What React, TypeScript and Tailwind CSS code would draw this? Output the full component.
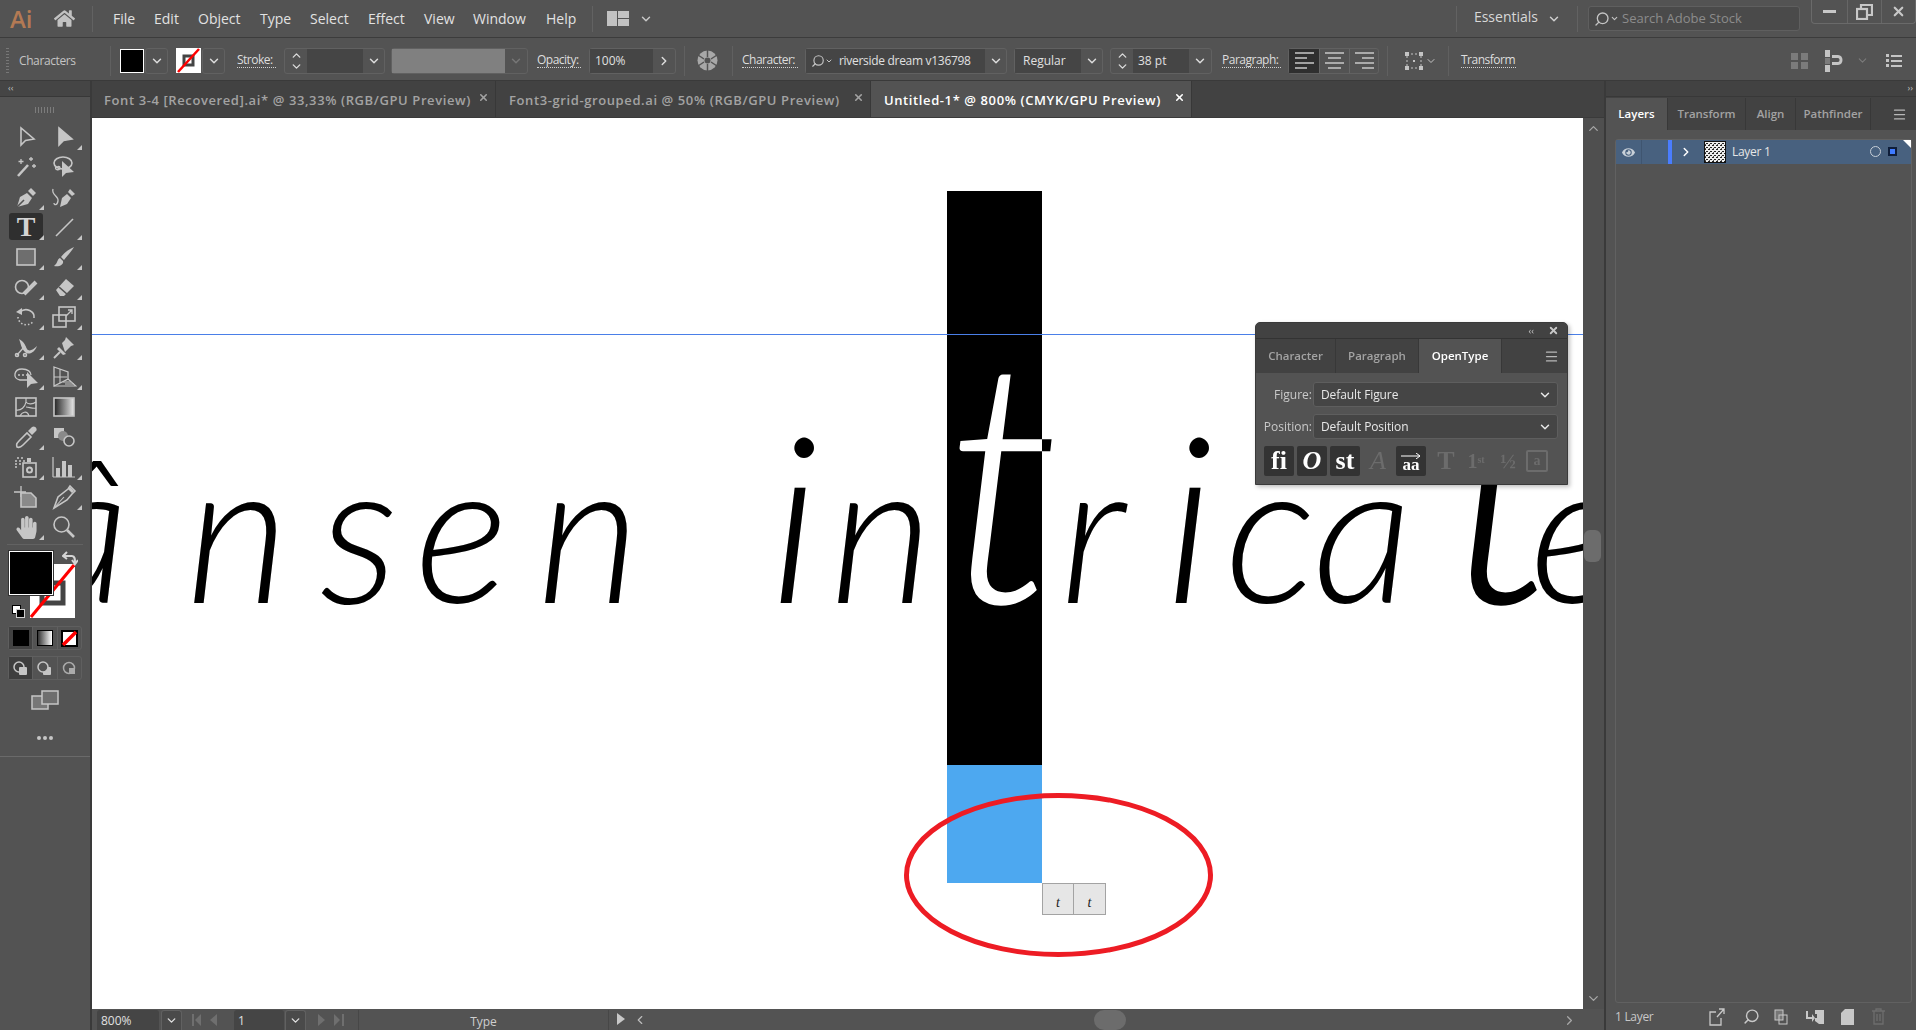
import type { ReactNode } from "react";
import { ChevronDown, ChevronLeft, ChevronRight, ChevronUp, Menu, Search, X } from "lucide-react";
import { FaEye, FaHandPaper, FaHome } from "react-icons/fa";

const tools: { icon: ReactNode; corner?: boolean }[] = [
  { icon: <path d="M8 4V21L12.5 16.5L21 15Z" /> },
  { icon: <path d="M8 4V21L12.5 16.5L21 15Z" fill="#c6c6c6" />, corner: true },
  {
    icon: (
      <>
        <path d="M5 22L15 11" strokeWidth="2.6" />
        <path d="M8 5V10M5.5 7.500H10.500M18 3V7M16 5H20M21 10V14M19 12H23" strokeWidth="1.3" />
      </>
    ),
  },
  {
    icon: (
      <>
        <ellipse cx="12" cy="9" rx="9" ry="6" />
        <path d="M5 12C3 16 8 17 9 14C9 12 6 12 6 14" strokeWidth="1.3" />
        <path d="M11 7V23L15 19L23 18Z" fill="#c6c6c6" stroke="none" />
      </>
    ),
  },
  {
    icon: (
      <>
        <path d="M4 23L7 13L14 9L19 14L15 20Z" fill="#c6c6c6" stroke="none" />
        <path d="M15 7L18 4L23 9L20 12Z" fill="#c6c6c6" stroke="none" />
        <path d="M4 23L11 16" stroke="#535353" />
      </>
    ),
    corner: true,
  },
  {
    icon: (
      <>
        <path d="M9 23L11 14L16 10L20 14L16 20Z" fill="#c6c6c6" stroke="none" />
        <path d="M17 8L19 5L24 10L21 12Z" fill="#c6c6c6" stroke="none" />
        <path d="M2 5C0 11 8 12 7 17C6 22 3 21 3 19" strokeWidth="1.3" />
      </>
    ),
  },
  { icon: <></>, corner: true },
  { icon: <path d="M5 22L22 5" />, corner: true },
  { icon: <rect x="4" y="5" width="18" height="16" fill="#6e6e6e" />, corner: true },
  {
    icon: (
      <>
        <path d="M23 3C20 8 16 12 13 16L10 13C13 9 18 5 23 3Z" fill="#c6c6c6" stroke="none" />
        <path d="M9 14C6 15 7 19 3 22C8 23 13 21 12 17Z" fill="#c6c6c6" stroke="none" />
      </>
    ),
    corner: true,
  },
  {
    icon: (
      <>
        <circle cx="9" cy="13" r="6.500" />
        <path d="M11 20L23 8" strokeWidth="4" />
      </>
    ),
    corner: true,
  },
  {
    icon: (
      <>
        <path d="M5 16L15 5L23 12L13 22L9 22Z" fill="#c6c6c6" stroke="none" />
        <path d="M8 13L17 21" stroke="#535353" />
      </>
    ),
    corner: true,
  },
  {
    icon: (
      <>
        <path d="M7 8C13 3 22 7 21 14" />
        <path d="M3 8L9 4V11Z" fill="#c6c6c6" stroke="none" />
        <path d="M5 13C5 19 13 24 20 18" strokeDasharray="1.500 2" />
      </>
    ),
    corner: true,
  },
  {
    icon: (
      <>
        <rect x="8" y="3" width="16" height="14" />
        <rect x="2" y="11" width="13" height="12" />
        <path d="M15 12L21 6M17 6H21V10" strokeWidth="1.3" />
      </>
    ),
    corner: true,
  },
  {
    icon: (
      <>
        <path d="M6 5C12 8 12 12 14 15C16 18 20 16 24 12C22 18 16 22 12 18C8 14 8 10 6 5Z" fill="#c6c6c6" stroke="none" />
        <path d="M4 21L12 12" strokeWidth="1.3" />
        <circle cx="4" cy="21" r="1.500" />
        <circle cx="12" cy="21" r="1.500" />
      </>
    ),
    corner: true,
  },
  {
    icon: (
      <>
        <path d="M15 3L23 11L20 12L14 18L11 9L14 6Z" fill="#c6c6c6" stroke="none" />
        <path d="M8 13L15 20L12 21L6 15Z" fill="#c6c6c6" stroke="none" />
        <path d="M9 18L3 24" strokeWidth="2" />
      </>
    ),
    corner: true,
  },
  {
    icon: (
      <>
        <path d="M15 16H7C-1 14 1 5 9 5C15 5 18 8 18 11" strokeWidth="1.3" />
        <path d="M5 11H14" strokeDasharray="2 2" strokeWidth="1.500" />
        <path d="M14 8V24L18 20L25 19Z" fill="#c6c6c6" stroke="none" />
      </>
    ),
    corner: true,
  },
  {
    icon: (
      <>
        <path d="M3 3L17 8V15L3 22Z" strokeWidth="1.300" />
        <path d="M9 5V19M3 13H16M17 15L25 22H3" strokeWidth="1.100" />
        <path d="M12 18H20M14 20H23" strokeWidth="1" />
      </>
    ),
    corner: true,
  },
  {
    icon: (
      <>
        <rect x="3" y="4" width="20" height="18" />
        <path d="M3 16C8 17 12 13 13 8C15 11 20 10 23 8M13 8V4M7 22C9 18 14 16 16 22M13 13C16 13 20 15 23 14" strokeWidth="1.200" />
      </>
    ),
  },
  {
    icon: (
      <>
        <defs>
          <linearGradient id="toolGrad">
            <stop offset="0" stopColor="#222" />
            <stop offset="1" stopColor="#e8e8e8" />
          </linearGradient>
        </defs>
        <rect x="3" y="4" width="20" height="18" fill="url(#toolGrad)" />
      </>
    ),
  },
  {
    icon: (
      <>
        <path d="M4 23C3 20 4 19 6 17L14 9L18 13L10 21C8 23 6 24 4 23Z" />
        <path d="M15 7L19 3C22 1 25 5 23 7L19 11Z" fill="#c6c6c6" stroke="none" />
      </>
    ),
    corner: true,
  },
  {
    icon: (
      <>
        <rect x="3" y="4" width="10" height="10" fill="#c6c6c6" stroke="none" />
        <circle cx="12" cy="12" r="5" fill="#8a8a8a" stroke="none" />
        <circle cx="18" cy="17" r="5" fill="#535353" />
      </>
    ),
  },
  {
    icon: (
      <>
        <path d="M2 7H4M6 7H8M10 7H12M2 10H4M6 10H8M2 13H4M4 4H6M8 4H10" strokeWidth="1.400" />
        <rect x="14" y="4" width="4" height="4" fill="#c6c6c6" stroke="none" />
        <rect x="10" y="9" width="13" height="14" />
        <circle cx="16.500" cy="16" r="2.500" strokeWidth="2" />
      </>
    ),
    corner: true,
  },
  {
    icon: (
      <>
        <path d="M2 23H24M2 3V23" strokeWidth="1.200" />
        <rect x="5" y="14" width="4" height="9" fill="#c6c6c6" stroke="none" />
        <rect x="11" y="7" width="4" height="16" fill="#c6c6c6" stroke="none" />
        <rect x="17" y="11" width="4" height="12" fill="#c6c6c6" stroke="none" />
      </>
    ),
    corner: true,
  },
  {
    icon: (
      <>
        <path d="M1 8H13M8 2V13" strokeWidth="1.300" />
        <path d="M8 9H18L23 14V23H8Z" fill="#8a8a8a" />
      </>
    ),
  },
  {
    icon: (
      <>
        <path d="M3 24L7 13L17 5L19 2L24 7L21 10L16 16Z" />
        <path d="M3 24L13 13" strokeWidth="1.100" />
        <path d="M18 4L22 8" strokeWidth="3" />
      </>
    ),
    corner: true,
  },
  { icon: <></>, corner: true },
  {
    icon: (
      <>
        <circle cx="10.500" cy="10.500" r="7.500" />
        <path d="M16 16L23 23" strokeWidth="2.600" />
      </>
    ),
  },
];

const inputBox = "flex items-center rounded-[3px] border border-[#616161] bg-[#535353] h-[26px]";

function ToolPanel() {
  return (
    <div className="w-[92px] shrink-0 border-r-2 border-[#3a3a3a] bg-[#535353] flex flex-col">
      <div className="h-[16px] bg-[#454545] border-b border-[#383838] text-[#c0c0c0] text-[9px] leading-[14px] pl-[8px]">‹‹</div>
      <div className="h-[25px] flex items-center justify-center">
        <div className="w-[20px] h-[6px] bg-[repeating-linear-gradient(90deg,#7c7c7c_0,#7c7c7c_1px,transparent_1px,transparent_3px)]" />
      </div>
      <div className="pl-[7px] grid grid-cols-[38px_38px] auto-rows-[30px]">
        {tools.map((tool, index) => (
          <div key={index} className="relative flex items-center justify-center">
            {index === 6 && (
              <div className="absolute left-[2px] top-[1px] w-[34px] h-[27px] rounded-[3px] bg-[#2f2f2f]" />
            )}
            {index === 6 ? (
              <span className="relative font-['Liberation_Serif',serif] font-bold text-[28px] leading-none text-[#d4d4d4]">T</span>
            ) : index === 26 ? (
              <FaHandPaper className="text-[#c6c6c6]" size={23} />
            ) : (
              <svg width="26" height="26" viewBox="0 0 26 26" fill="none" stroke="#c6c6c6" strokeWidth="1.600">
                {tool.icon}
              </svg>
            )}
            {tool.corner && (
              <div className="absolute right-[1px] bottom-[2px] w-0 h-0 border-l-[5px] border-l-transparent border-b-[5px] border-b-[#c6c6c6]" />
            )}
          </div>
        ))}
      </div>
      <div className="mx-[7px] mt-[2px] h-px bg-[#626262]" />

      {/* fill and stroke */}
      <div className="relative h-[75px] mt-[6px]">
        <svg className="absolute left-[30px] top-[13px]" width="45" height="54" viewBox="0 0 45 54">
          <rect width="45" height="54" fill="#fff" />
          <rect x="12" y="19" width="21" height="20" fill="none" stroke="#444" strokeWidth="5" />
          <path d="M1 53L44 1" stroke="#f00" strokeWidth="3" />
        </svg>
        <div className="absolute left-[9px] top-0 w-[44px] h-[44px] bg-black border border-white outline outline-[#333]" />
        <svg className="absolute left-[62px] top-[-1px]" width="16" height="16" viewBox="0 0 16 16" fill="none" stroke="#d4d4d4" strokeWidth="2">
          <path d="M2 6H10C13 6 13 9 13 13" />
          <path d="M5 2L1 6L5 9M10 10L13 14L16 10" />
        </svg>
        <div className="absolute left-[12px] top-[54px] w-[9px] h-[9px] bg-white border border-black" />
        <div className="absolute left-[16px] top-[58px] w-[9px] h-[9px] bg-black border border-[#cfcfcf]" />
      </div>
      <div className="mx-[8px] h-[24px] flex rounded-[3px] border border-[#5f5f5f]">
        <div className="flex-1 bg-[#414141] flex items-center justify-center">
          <div className="w-[16px] h-[16px] bg-black border border-black" />
        </div>
        <div className="flex-1 flex items-center justify-center border-l border-[#5f5f5f]">
          <div className="w-[16px] h-[16px] border border-black bg-[linear-gradient(90deg,#333,#fff)]" />
        </div>
        <div className="flex-1 flex items-center justify-center border-l border-[#5f5f5f]">
          <svg width="17" height="17" viewBox="0 0 17 17">
            <rect x="1" y="1" width="15" height="15" fill="#fff" stroke="#000" strokeWidth="2" />
            <path d="M2 15L15 2" stroke="#f00" strokeWidth="3.500" />
          </svg>
        </div>
      </div>
      <div className="mx-[8px] mt-[6px] h-[24px] flex rounded-[3px] border border-[#5f5f5f]">
        <div className="flex-1 bg-[#3e3e3e] flex items-center justify-center">
          <svg width="15" height="15" viewBox="0 0 15 15">
            <circle cx="6" cy="6" r="5" fill="none" stroke="#c6c6c6" strokeWidth="1.500" />
            <rect x="6" y="6" width="8" height="8" rx="1" fill="#c6c6c6" />
          </svg>
        </div>
        <div className="flex-1 flex items-center justify-center border-l border-[#5f5f5f]">
          <svg width="15" height="15" viewBox="0 0 15 15">
            <rect x="6" y="6" width="8" height="8" rx="1" fill="#c6c6c6" />
            <circle cx="6" cy="6" r="5" fill="#535353" stroke="#c6c6c6" strokeWidth="1.500" />
          </svg>
        </div>
        <div className="flex-1 flex items-center justify-center border-l border-[#5f5f5f]">
          <svg width="15" height="15" viewBox="0 0 15 15">
            <circle cx="7" cy="7" r="5.500" fill="none" stroke="#aaa" strokeWidth="1.500" />
            <path d="M7 7H13V13H7Z" fill="#aaa" />
          </svg>
        </div>
      </div>
      <div className="mt-[10px] flex justify-center">
        <svg width="28" height="20" viewBox="0 0 28 20">
          <rect x="1" y="6" width="16" height="13" fill="#777" stroke="#c6c6c6" strokeWidth="1.500" />
          <rect x="11" y="1" width="16" height="13" fill="#6e6e6e" stroke="#c6c6c6" strokeWidth="1.500" />
        </svg>
      </div>
      <div className="mt-[26px] flex justify-center gap-[2px]">
        <div className="w-[4px] h-[4px] rounded-full bg-[#c6c6c6]" />
        <div className="w-[4px] h-[4px] rounded-full bg-[#c6c6c6]" />
        <div className="w-[4px] h-[4px] rounded-full bg-[#c6c6c6]" />
      </div>
      <div className="mt-[16px] h-px bg-[#6a6a6a]" />
    </div>
  );
}

function TopBar() {
  const menus = [
    ["File", "w-[41px]"],
    ["Edit", "w-[44px]"],
    ["Object", "w-[62px]"],
    ["Type", "w-[50px]"],
    ["Select", "w-[58px]"],
    ["Effect", "w-[56px]"],
    ["View", "w-[49px]"],
    ["Window", "w-[73px]"],
    ["Help", "w-[46px]"],
  ];
  return (
    <div className="h-[38px] shrink-0 flex items-center bg-[#535353] border-b border-[#3c3c3c] relative">
      <span className="ml-[10px] w-[30px] font-['Open_Sans',sans-serif] text-[24px] font-semibold leading-none text-[#b37a54]">Ai</span>
      <FaHome className="ml-[14px] text-[#c2c2c2]" size={21} />
      <div className="ml-[17px] w-px h-[26px] bg-[#626262]" />
      <div className="ml-[20px] flex text-[14px] text-[#e2e2e2]">
        {menus.map(([label, width]) => (
          <span key={label} className={width}>
            {label}
          </span>
        ))}
      </div>
      <div className="w-px h-[26px] bg-[#626262]" />
      <svg className="ml-[14px]" width="22" height="15" viewBox="0 0 22 15" fill="#c2c2c2">
        <rect x="0" y="0" width="10" height="15" />
        <rect x="11" y="0" width="11" height="7" />
        <rect x="11" y="8" width="11" height="7" />
      </svg>
      <ChevronDown className="ml-[10px] text-[#c8c8c8]" size={14} strokeWidth={2.500} />
      <div className="ml-auto w-px h-[26px] bg-[#626262]" />
      <span className="ml-[17px] text-[14px] text-[#d8d8d8] -mt-[4px]">Essentials</span>
      <ChevronDown className="ml-[9px] text-[#d0d0d0]" size={14} strokeWidth={2.500} />
      <div className="ml-[16px] w-px h-[26px] bg-[#626262]" />
      <div className="ml-[10px] w-[212px] h-[25px] flex items-center rounded-[3px] border border-[#5f5f5f] bg-[#4a4a4a]">
        <Search className="ml-[5px] -scale-x-100 text-[#c4c4c4]" size={16} />
        <ChevronDown className="text-[#c4c4c4]" size={9} strokeWidth={3} />
        <span className="ml-[3px] text-[13px] text-[#8c8c8c]">Search Adobe Stock</span>
      </div>
      <div className="ml-[11px] w-[105px] h-[24px] self-start flex rounded-b-[4px] border-x border-b border-[#6a6a6a] text-[#c8c8c8]">
        <div className="w-[35px] flex items-center justify-center">
          <div className="w-[13px] h-[3px] bg-[#c8c8c8]" />
        </div>
        <div className="w-[34px] flex items-center justify-center border-l border-[#666]">
          <svg width="17" height="16" viewBox="0 0 17 16" fill="none" stroke="#c8c8c8" strokeWidth="2.200">
            <rect x="1" y="5" width="10" height="10" />
            <path d="M5 5V1H16V11H11" />
          </svg>
        </div>
        <div className="flex-1 flex items-center justify-center border-l border-[#666]">
          <X size={15} strokeWidth={3.500} />
        </div>
      </div>
    </div>
  );
}

function Label({ children, className }: { children: ReactNode; className: string }) {
  return (
    <span className={`text-[12px] leading-[14px] text-[#dedede] border-b border-dotted border-[#d0d0d0] tracking-[-0.5px] ${className}`}>
      {children}
    </span>
  );
}

function ChevCell({ className }: { className: string }) {
  return (
    <div className={`h-full flex items-center justify-center ${className}`}>
      <ChevronDown className="text-[#dcdcdc]" size={14} strokeWidth={2.500} />
    </div>
  );
}

function Stepper() {
  return (
    <div className="w-[22px] h-full flex flex-col items-center justify-center text-[#dcdcdc]">
      <ChevronUp size={13} strokeWidth={2.500} className="-mb-[1px]" />
      <ChevronDown size={13} strokeWidth={2.500} className="-mt-[1px]" />
    </div>
  );
}

function Lines({ d }: { d: string }) {
  return (
    <svg width="21" height="17" viewBox="0 0 21 17" fill="none" stroke="#c9c9c9" strokeWidth="1.500">
      <path d={d} />
    </svg>
  );
}

function OptionsBar() {
  return (
    <div className="h-[43px] shrink-0 flex items-center pt-[3px] bg-[#535353] border-b border-[#3a3a3a] text-[12px] text-[#e0e0e0]">
      <div className="ml-[6px] w-[3px] h-[26px] bg-[repeating-linear-gradient(180deg,#777_0,#777_1px,transparent_1px,transparent_3px)]" />
      <span className="ml-[10px] w-[91px] text-[#c4c4c4] tracking-[-0.4px]">Characters</span>
      <div className="w-px h-[30px] bg-[#606060]" />
      <div className="ml-[9px] w-[24px] h-[24px] bg-black border border-white" />
      <div className={`${inputBox} ml-[1px] w-[23px] justify-center`}>
        <ChevronDown className="text-[#dcdcdc]" size={14} strokeWidth={2.500} />
      </div>
      <svg className="ml-[8px]" width="25" height="25" viewBox="0 0 25 25">
        <rect width="25" height="25" fill="#fff" />
        <rect x="8" y="8" width="9" height="9" fill="none" stroke="#444" strokeWidth="3" />
        <path d="M2 24L23 1" stroke="#f00" strokeWidth="2.500" />
      </svg>
      <div className={`${inputBox} ml-[1px] w-[23px] justify-center`}>
        <ChevronDown className="text-[#dcdcdc]" size={14} strokeWidth={2.500} />
      </div>
      <Label className="ml-[12px] w-[39px]">Stroke:</Label>
      <div className={`${inputBox} ml-[8px] w-[101px]`}>
        <Stepper />
        <div className="w-[56px] h-full bg-[#454545]" />
        <ChevCell className="flex-1" />
      </div>
      <div className={`${inputBox} ml-[6px] w-[137px] border-[#5d5d5d]`}>
        <div className="w-[113px] h-full bg-[#808080]" />
        <div className="flex-1 flex justify-center">
          <ChevronDown className="text-[#777]" size={14} strokeWidth={2.500} />
        </div>
      </div>
      <Label className="ml-[9px] w-[44px]">Opacity:</Label>
      <div className={`${inputBox} ml-[8px] w-[87px]`}>
        <div className="w-[63px] h-full bg-[#454545] pl-[5px] flex items-center">100%</div>
        <div className="flex-1 flex justify-center">
          <ChevronRight className="text-[#dcdcdc]" size={14} strokeWidth={2.500} />
        </div>
      </div>
      <div className="ml-[8px] w-px h-[30px] bg-[#606060]" />
      <svg className="ml-[12px]" width="21" height="21" viewBox="0 0 21 21">
        <circle cx="10.500" cy="10.500" r="10" fill="#a8a8a8" />
        <circle cx="10.500" cy="10.500" r="3" fill="#535353" />
        <path d="M10.500 0V7M10.500 14V21M1 5L7 9M14 12L20 16M1 16L7 12M14 9L20 5" stroke="#535353" strokeWidth="1.500" />
      </svg>
      <div className="ml-[14px] w-px h-[30px] bg-[#606060]" />
      <Label className="ml-[9px] w-[56px]">Character:</Label>
      <div className={`${inputBox} ml-[7px] w-[202px]`}>
        <div className="w-[179px] h-full bg-[#454545] flex items-center overflow-hidden">
          <Search className="ml-[5px] -scale-x-100 text-[#c4c4c4]" size={14} />
          <ChevronDown className="text-[#c4c4c4]" size={8} strokeWidth={3} />
          <span className="ml-[6px] whitespace-nowrap tracking-[-0.3px]">riverside dream v136798</span>
        </div>
        <ChevCell className="flex-1" />
      </div>
      <div className={`${inputBox} ml-[7px] w-[89px]`}>
        <div className="w-[66px] h-full bg-[#454545] pl-[8px] flex items-center">Regular</div>
        <ChevCell className="flex-1" />
      </div>
      <div className={`${inputBox} ml-[7px] w-[102px]`}>
        <Stepper />
        <div className="w-[56px] h-full bg-[#454545] pl-[5px] flex items-center">38 pt</div>
        <ChevCell className="flex-1" />
      </div>
      <Label className="ml-[10px] w-[59px]">Paragraph:</Label>
      <div className={`${inputBox} ml-[7px] w-[91px]`}>
        <div className="w-[30px] h-full bg-[#2f2f2f] flex items-center justify-center">
          <Lines d="M1 1H20M1 6H13M1 11H20M1 16H13" />
        </div>
        <div className="w-[30px] h-full flex items-center justify-center border-l border-[#666]">
          <Lines d="M1 1H20M4 6H17M1 11H20M4 16H17" />
        </div>
        <div className="flex-1 h-full flex items-center justify-center border-l border-[#666]">
          <Lines d="M1 1H20M8 6H20M1 11H20M8 16H20" />
        </div>
      </div>
      <div className="ml-[8px] w-px h-[30px] bg-[#606060]" />
      <svg className="ml-[17px]" width="18" height="18" viewBox="0 0 18 18" fill="none" stroke="#c4c4c4">
        <rect x="2" y="2" width="14" height="14" strokeDasharray="2 2" />
        <path d="M0 0H4V4H0ZM14 0H18V4H14ZM0 14H4V18H0ZM14 14H18V18H14ZM8 8H10V10H8Z" fill="#c4c4c4" stroke="none" />
      </svg>
      <ChevronDown className="ml-[2px] text-[#c4c4c4]" size={12} />
      <div className="ml-[11px] w-px h-[30px] bg-[#606060]" />
      <Label className="ml-[12px] w-[55px]">Transform</Label>
      <svg className="ml-[275px]" width="18" height="18" viewBox="0 0 18 18" fill="#7b7b7b">
        <rect x="0" y="1" width="7" height="7" />
        <rect x="10" y="1" width="7" height="7" />
        <rect x="0" y="10" width="7" height="7" />
        <rect x="10" y="10" width="7" height="7" />
      </svg>
      <svg className="ml-[16px]" width="20" height="22" viewBox="0 0 20 22">
        <rect x="0" y="0" width="5" height="7" fill="#c4c4c4" />
        <rect x="0" y="15" width="5" height="7" fill="#c4c4c4" />
        <rect x="0" y="8" width="5" height="6" fill="#7b7b7b" />
        <path d="M7 5H13C19 5 19 15 13 15H7V12H13C15 12 15 8 13 8H7Z" fill="#c4c4c4" />
      </svg>
      <ChevronDown className="ml-[11px] text-[#7b7b7b]" size={13} />
      <svg className="ml-[17px]" width="16" height="13" viewBox="0 0 16 13" fill="#c4c4c4">
        <path d="M0 0H3V3H0ZM0 5H3V8H0ZM0 10H3V13H0ZM5 1H16V3H5ZM5 6H16V8H5ZM5 11H16V13H5Z" />
      </svg>
    </div>
  );
}

function DocTab({ title, className, active }: { title: string; className: string; active?: boolean }) {
  return (
    <div className={`h-full flex items-center pt-[3px] relative border-r border-[#383838] ${active ? "bg-[#535353] text-white" : "bg-[#424242] text-[#a3a3a3]"} ${className}`}>
      <span className="text-[13px] font-semibold tracking-[0.6px] whitespace-nowrap">{title}</span>
      <X className="absolute right-[6px] top-[11px]" size={11} strokeWidth={3.500} />
    </div>
  );
}

function OpenTypePanel() {
  return (
    <div className="absolute left-[1163px] top-[204px] z-10 w-[313px] h-[163px] rounded-t-[5px] bg-[#535353] border border-[#3a3a3a] shadow-[2px_2px_4px_rgba(0,0,0,0.25)] font-['Open_Sans',sans-serif] text-[12px]">
      <div className="h-[16px] bg-[#424242] rounded-t-[4px] border-b border-[#333] flex items-center justify-end text-[#c8c8c8]">
        <span className="text-[9px] mr-[14px]">‹‹</span>
        <X className="mr-[8px]" size={11} strokeWidth={4} />
      </div>
      <div className="h-[34px] flex bg-[#424242] text-[#a3a3a3] font-semibold text-[11.500px]">
        <div className="w-[80px] flex items-center justify-center border-r border-[#383838]">Character</div>
        <div className="w-[83px] flex items-center justify-center border-r border-[#383838]">Paragraph</div>
        <div className="w-[83px] flex items-center justify-center bg-[#535353] text-white border-r border-[#383838]">OpenType</div>
        <Menu className="ml-auto mr-[8px] mt-[10px] text-[#b8b8b8]" size={15} />
      </div>
      <div className="flex items-center mt-[9px] h-[25px]">
        <span className="w-[56px] text-right text-[#c9c9c9]">Figure:</span>
        <div className="ml-[1px] w-[245px] h-full rounded-[3px] bg-[#454545] border border-[#5e5e5e] flex items-center justify-between pl-[7px] pr-[5px] text-[#e8e8e8] tracking-[-0.1px]">
          Default Figure
          <ChevronDown size={14} strokeWidth={2.500} />
        </div>
      </div>
      <div className="flex items-center mt-[7px] h-[25px]">
        <span className="w-[56px] text-right text-[#c9c9c9]">Position:</span>
        <div className="ml-[1px] w-[245px] h-full rounded-[3px] bg-[#454545] border border-[#5e5e5e] flex items-center justify-between pl-[7px] pr-[5px] text-[#e8e8e8] tracking-[-0.1px]">
          Default Position
          <ChevronDown size={14} strokeWidth={2.500} />
        </div>
      </div>
      <div className="mt-[7px] ml-[8px] flex items-center h-[30px] font-['Liberation_Serif',serif] font-bold text-[26px] leading-none">
        <div className="w-[30px] h-[30px] rounded-[2px] bg-[#333] text-white flex items-center justify-center">fi</div>
        <div className="ml-[3px] w-[30px] h-[30px] rounded-[2px] bg-[#333] text-white flex items-center justify-center italic">O</div>
        <div className="ml-[3px] w-[30px] h-[30px] rounded-[2px] bg-[#333] text-white flex items-center justify-center">st</div>
        <div className="ml-[8px] w-[20px] text-[#6c6c6c] italic font-normal text-center">A</div>
        <div className="relative ml-[8px] w-[30px] h-[30px] rounded-[2px] bg-[#333] text-white flex items-end justify-center pb-[3px] text-[17px]">
          aa
          <svg className="absolute top-[7px] left-[5px]" width="20" height="6" viewBox="0 0 20 6" fill="none" stroke="#fff">
            <path d="M0 3H19M15 0L19 3L15 6" />
          </svg>
        </div>
        <div className="ml-[10px] w-[20px] text-center text-[#6c6c6c]">T</div>
        <div className="ml-[8px] w-[24px] text-center text-[#6c6c6c] text-[20px]">1<sup className="text-[10px]">st</sup></div>
        <div className="ml-[8px] w-[24px] text-center text-[#6c6c6c] text-[21px]">½</div>
        <div className="ml-[6px] w-[22px] h-[22px] border-2 border-[#6c6c6c] rounded-[2px] text-[#6c6c6c] text-[14px] flex items-center justify-center">a</div>
      </div>
    </div>
  );
}

function Canvas() {
  return (
    <div className="relative flex-1 isolate overflow-hidden bg-white">
      <div className="absolute left-[855px] top-[73px] w-[95px] flex flex-col">
        <div className="h-[574px] bg-black" />
        <div className="h-[118px] bg-[#4da8f0]" />
      </div>
      <div className="absolute left-0 right-0 top-[216px] h-px bg-[#4a7fe8]" />

      {/* script line, letters spaced to sit where the picture has them */}
      <div className="absolute left-[-62px] top-[183px] flex items-baseline whitespace-nowrap font-['Lato',sans-serif] italic font-light text-[200px] leading-none text-white mix-blend-difference">
        <span className="inline-block w-[156px]">â</span>
        <span className="inline-block w-[134px]">n</span>
        <span className="inline-block w-[95px]">s</span>
        <span className="inline-block w-[122px]">e</span>
        <span className="inline-block w-[233px]">n </span>
        <span className="inline-block w-[60px] text-[232px]">i</span>
        <span className="inline-block w-[115px]">n</span>
        <span className="inline-block w-[115px] text-[340px]">t</span>
        <span className="inline-block w-[105px]">r</span>
        <span className="inline-block w-[60px] text-[232px]">i</span>
        <span className="inline-block w-[88px]">c</span>
        <span className="inline-block w-[132px]">a</span>
        <span className="inline-block w-[85px] text-[340px]">t</span>
        <span className="inline-block w-[100px]">e</span>
      </div>

      <svg className="absolute left-[812px] top-[675px]" width="309" height="164" viewBox="0 0 309 164" fill="none">
        <ellipse cx="154.500" cy="82" rx="152" ry="79.500" stroke="#ed1c24" strokeWidth="5" />
      </svg>
      <div className="absolute left-[950px] top-[765px] flex border border-[#a3a3a3] bg-[#e6e6e6] font-['Liberation_Serif',serif] italic text-[14px] text-[#222]">
        <div className="w-[31px] h-[30px] border-r border-[#a3a3a3] flex items-end justify-center pb-[1px]">t</div>
        <div className="w-[31px] h-[30px] flex items-end justify-center pb-[1px]">t</div>
      </div>
      <OpenTypePanel />
    </div>
  );
}

function StatusBar() {
  return (
    <div className="h-[21px] shrink-0 bg-[#535353] flex items-end text-[12px] text-[#e0e0e0]">
      <div className="ml-[5px] w-[62px] h-[20px] rounded-t-[3px] bg-[#454545] pl-[4px] leading-[22px]">800%</div>
      <div className="ml-[2px] w-[21px] h-[20px] rounded-t-[3px] bg-[#4a4a4a] border-x border-t border-[#616161] flex items-center justify-center">
        <ChevronDown size={13} strokeWidth={2.500} />
      </div>
      <div className="ml-[10px] w-[42px] h-[20px] flex items-center gap-[8px] text-[#6f6f6f]">
        <svg width="10" height="12" viewBox="0 0 10 12" fill="currentColor"><path d="M0 0H2V12H0ZM9 0V12L3 6Z" /></svg>
        <svg width="8" height="12" viewBox="0 0 8 12" fill="currentColor"><path d="M7 0V12L0 6Z" /></svg>
      </div>
      <div className="w-[50px] h-[20px] rounded-t-[3px] bg-[#454545] pl-[4px] leading-[22px]">1</div>
      <div className="ml-[1px] w-[21px] h-[20px] rounded-t-[3px] bg-[#4a4a4a] border-x border-t border-[#616161] flex items-center justify-center">
        <ChevronDown size={13} strokeWidth={2.500} />
      </div>
      <div className="ml-[12px] w-[40px] h-[20px] flex items-center gap-[8px] text-[#6f6f6f]">
        <svg width="8" height="12" viewBox="0 0 8 12" fill="currentColor"><path d="M0 0V12L7 6Z" /></svg>
        <svg width="10" height="12" viewBox="0 0 10 12" fill="currentColor"><path d="M0 0V12L6 6ZM8 0H10V12H8Z" /></svg>
      </div>
      <div className="w-[251px] h-[20px] border-x border-[#474747] text-center leading-[24px] text-[#cfcfcf]">Type</div>
      <div className="ml-[8px] mb-[5px] w-0 h-0 border-y-[6px] border-y-transparent border-l-[8px] border-l-[#c8c8c8]" />
      <ChevronLeft className="ml-[8px] mb-[3px] text-[#bdbdbd]" size={14} />
      <div className="ml-[447px] w-[32px] h-[20px] rounded-[10px] bg-[#6c6c6c]" />
      <ChevronRight className="ml-[436px] mb-[2px] text-[#a8a8a8]" size={15} />
    </div>
  );
}

function RightPanel() {
  return (
    <div className="w-[312px] shrink-0 border-l-2 border-[#3a3a3a] bg-[#535353] flex flex-col font-['Open_Sans',sans-serif]">
      <div className="h-[16px] bg-[#424242] border-b border-[#383838] text-right pr-[3px] text-[9px] leading-[14px] text-[#c0c0c0]">››</div>
      <div className="h-[33px] flex bg-[#424242] text-[#a3a3a3] font-semibold text-[11.500px] pt-[1px]">
        <div className="w-[61px] flex items-center justify-center bg-[#535353] text-white">Layers</div>
        <div className="w-[79px] flex items-center justify-center border-x border-[#383838]">Transform</div>
        <div className="w-[50px] flex items-center justify-center border-r border-[#383838]">Align</div>
        <div className="w-[75px] flex items-center justify-center border-r border-[#383838]">Pathfinder</div>
        <Menu className="ml-auto mr-[9px] mt-[9px] text-[#b8b8b8]" size={15} />
      </div>
      <div className="ml-[9px] mr-[4px] mt-[9px] flex-1 rounded-[3px] border border-[#616161]">
        <div className="relative h-[24px] flex items-center bg-[#48617f] text-[12px] text-[#e6e6e6]">
          <div className="w-[26px] h-full flex items-center justify-center border-r border-[#3f5570]">
            <FaEye size={13} className="text-[#c8d0d8]" />
          </div>
          <div className="w-[27px] h-full border-r border-[#3f5570]" />
          <div className="-ml-[1px] w-[4px] h-full bg-[#4a7dff]" />
          <ChevronRight className="ml-[7px] text-white" size={14} strokeWidth={2.500} />
          <svg className="ml-[11px]" width="22" height="22" viewBox="0 0 22 22">
            <defs>
              <pattern id="layerNoise" width="4" height="4" patternUnits="userSpaceOnUse">
                <rect width="4" height="4" fill="#eee" />
                <rect width="2" height="1" fill="#222" />
                <rect x="2" y="2" width="2" height="1" fill="#222" />
                <rect x="1" y="3" width="1" height="1" fill="#555" />
              </pattern>
            </defs>
            <rect x="0.500" y="0.500" width="21" height="21" fill="url(#layerNoise)" stroke="#111" />
          </svg>
          <span className="ml-[6px] tracking-[-0.3px]">Layer 1</span>
          <div className="absolute right-[30px] top-[6px] w-[11px] h-[11px] rounded-full border border-[#c8d0d8]" />
          <div className="absolute right-[14px] top-[7px] w-[9px] h-[9px] bg-[#3f7bff] border-2 border-[#0f1e3a]" />
          <div className="absolute right-0 top-0 w-0 h-0 border-t-[8px] border-t-white border-l-[8px] border-l-transparent" />
        </div>
      </div>
      <div className="h-[27px] shrink-0 flex items-center text-[#c8c8c8]">
        <span className="ml-[9px] w-[87px] text-[12px] tracking-[-0.3px]">1 Layer</span>
        <svg className="ml-[7px]" width="16" height="18" viewBox="0 0 16 18" fill="none" stroke="#c8c8c8" strokeWidth="1.300">
          <path d="M7 4H1V17H12V10M8 9L15 1M10 1H15V6" />
        </svg>
        <Search className="ml-[18px] -scale-x-100" size={17} />
        <svg className="ml-[14px]" width="14" height="16" viewBox="0 0 14 16" fill="none" stroke="#c8c8c8">
          <rect x="1" y="1" width="8" height="10" fill="#777" />
          <rect x="5" y="6" width="8" height="9" />
        </svg>
        <svg className="ml-[18px]" width="18" height="16" viewBox="0 0 18 16" fill="#c8c8c8">
          <path d="M0 2H2V8H6V5L9 9L6 13V10H0ZM9 1H18V15H13L9 12V9H11V5H9Z" />
        </svg>
        <svg className="ml-[17px]" width="13" height="16" viewBox="0 0 13 16" fill="#c8c8c8">
          <path d="M0 4L4 0H13V16H0Z" />
        </svg>
        <svg className="ml-[18px]" width="13" height="17" viewBox="0 0 13 17" fill="none" stroke="#6e6e6e" strokeWidth="1.300">
          <path d="M0 3H13M4 3V1H9V3M2 3V16H11V3M5 6V13M8 6V13" />
        </svg>
      </div>
    </div>
  );
}

export default function App() {
  return (
    <div className="w-[1916px] h-[1030px] overflow-hidden flex flex-col bg-[#535353] font-['Open_Sans',sans-serif]">
      <TopBar />
      <OptionsBar />
      <div className="flex flex-1 min-h-0">
        <ToolPanel />
        <div className="w-[1512px] flex flex-col">
          <div className="h-[37px] shrink-0 flex bg-[#424242] border-b border-[#3a3a3a]">
            <DocTab title="Font 3-4 [Recovered].ai* @ 33,33% (RGB/GPU Preview)" className="w-[404px] pl-[12px]" />
            <DocTab title="Font3-grid-grouped.ai @ 50% (RGB/GPU Preview)" className="w-[375px] pl-[13px]" />
            <DocTab title="Untitled-1* @ 800% (CMYK/GPU Preview)" className="w-[321px] pl-[13px]" active />
          </div>
          <div className="flex flex-1 min-h-0">
            <Canvas />
            <div className="relative w-[21px] shrink-0 bg-[#4f4f4f] flex flex-col items-center justify-between py-[3px] text-[#a8a8a8]">
              <ChevronUp size={15} />
              <div className="absolute left-[1px] top-[412px] w-[17px] h-[32px] rounded-[6px] bg-[#6c6c6c]" />
              <ChevronDown size={15} />
            </div>
          </div>
          <StatusBar />
        </div>
        <RightPanel />
      </div>
    </div>
  );
}
